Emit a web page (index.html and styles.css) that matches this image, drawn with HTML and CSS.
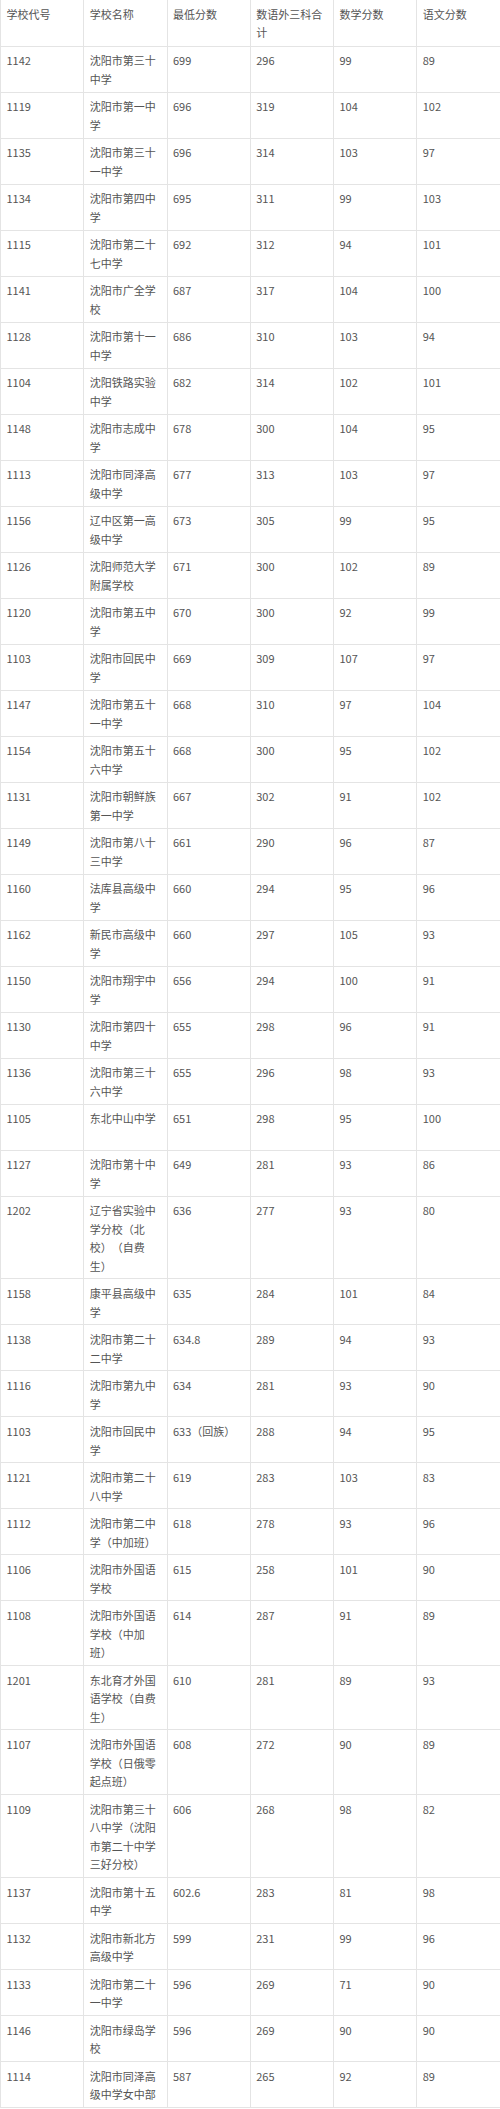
FILE: index.html
```html
<!DOCTYPE html>
<html lang="zh-CN">
<head>
<meta charset="utf-8">
<title>沈阳市高中录取分数</title>
<link rel="stylesheet" href="styles.css">
</head>
<body>
<table class="scores">
<colgroup><col><col><col><col><col><col></colgroup>
<tbody>
<tr><td>学校代号</td><td>学校名称</td><td>最低分数</td><td>数语外三科合计</td><td>数学分数</td><td>语文分数</td></tr>
<tr><td>1142</td><td>沈阳市第三十中学</td><td>699</td><td>296</td><td>99</td><td>89</td></tr>
<tr><td>1119</td><td>沈阳市第一中学</td><td>696</td><td>319</td><td>104</td><td>102</td></tr>
<tr><td>1135</td><td>沈阳市第三十一中学</td><td>696</td><td>314</td><td>103</td><td>97</td></tr>
<tr><td>1134</td><td>沈阳市第四中学</td><td>695</td><td>311</td><td>99</td><td>103</td></tr>
<tr><td>1115</td><td>沈阳市第二十七中学</td><td>692</td><td>312</td><td>94</td><td>101</td></tr>
<tr><td>1141</td><td>沈阳市广全学校</td><td>687</td><td>317</td><td>104</td><td>100</td></tr>
<tr><td>1128</td><td>沈阳市第十一中学</td><td>686</td><td>310</td><td>103</td><td>94</td></tr>
<tr><td>1104</td><td>沈阳铁路实验中学</td><td>682</td><td>314</td><td>102</td><td>101</td></tr>
<tr><td>1148</td><td>沈阳市志成中学</td><td>678</td><td>300</td><td>104</td><td>95</td></tr>
<tr><td>1113</td><td>沈阳市同泽高级中学</td><td>677</td><td>313</td><td>103</td><td>97</td></tr>
<tr><td>1156</td><td>辽中区第一高级中学</td><td>673</td><td>305</td><td>99</td><td>95</td></tr>
<tr><td>1126</td><td>沈阳师范大学附属学校</td><td>671</td><td>300</td><td>102</td><td>89</td></tr>
<tr><td>1120</td><td>沈阳市第五中学</td><td>670</td><td>300</td><td>92</td><td>99</td></tr>
<tr><td>1103</td><td>沈阳市回民中学</td><td>669</td><td>309</td><td>107</td><td>97</td></tr>
<tr><td>1147</td><td>沈阳市第五十一中学</td><td>668</td><td>310</td><td>97</td><td>104</td></tr>
<tr><td>1154</td><td>沈阳市第五十六中学</td><td>668</td><td>300</td><td>95</td><td>102</td></tr>
<tr><td>1131</td><td>沈阳市朝鲜族第一中学</td><td>667</td><td>302</td><td>91</td><td>102</td></tr>
<tr><td>1149</td><td>沈阳市第八十三中学</td><td>661</td><td>290</td><td>96</td><td>87</td></tr>
<tr><td>1160</td><td>法库县高级中学</td><td>660</td><td>294</td><td>95</td><td>96</td></tr>
<tr><td>1162</td><td>新民市高级中学</td><td>660</td><td>297</td><td>105</td><td>93</td></tr>
<tr><td>1150</td><td>沈阳市翔宇中学</td><td>656</td><td>294</td><td>100</td><td>91</td></tr>
<tr><td>1130</td><td>沈阳市第四十中学</td><td>655</td><td>298</td><td>96</td><td>91</td></tr>
<tr><td>1136</td><td>沈阳市第三十六中学</td><td>655</td><td>296</td><td>98</td><td>93</td></tr>
<tr><td>1105</td><td>东北中山中学</td><td>651</td><td>298</td><td>95</td><td>100</td></tr>
<tr><td>1127</td><td>沈阳市第十中学</td><td>649</td><td>281</td><td>93</td><td>86</td></tr>
<tr><td>1202</td><td>辽宁省实验中学分校（北校）（自费生）</td><td>636</td><td>277</td><td>93</td><td>80</td></tr>
<tr><td>1158</td><td>康平县高级中学</td><td>635</td><td>284</td><td>101</td><td>84</td></tr>
<tr><td>1138</td><td>沈阳市第二十二中学</td><td>634.8</td><td>289</td><td>94</td><td>93</td></tr>
<tr><td>1116</td><td>沈阳市第九中学</td><td>634</td><td>281</td><td>93</td><td>90</td></tr>
<tr><td>1103</td><td>沈阳市回民中学</td><td>633（回族）</td><td>288</td><td>94</td><td>95</td></tr>
<tr><td>1121</td><td>沈阳市第二十八中学</td><td>619</td><td>283</td><td>103</td><td>83</td></tr>
<tr><td>1112</td><td>沈阳市第二中学（中加班）</td><td>618</td><td>278</td><td>93</td><td>96</td></tr>
<tr><td>1106</td><td>沈阳市外国语学校</td><td>615</td><td>258</td><td>101</td><td>90</td></tr>
<tr><td>1108</td><td>沈阳市外国语学校（中加班）</td><td>614</td><td>287</td><td>91</td><td>89</td></tr>
<tr><td>1201</td><td>东北育才外国语学校（自费生）</td><td>610</td><td>281</td><td>89</td><td>93</td></tr>
<tr><td>1107</td><td>沈阳市外国语学校（日俄零起点班）</td><td>608</td><td>272</td><td>90</td><td>89</td></tr>
<tr><td>1109</td><td>沈阳市第三十八中学（沈阳市第二十中学三好分校）</td><td>606</td><td>268</td><td>98</td><td>82</td></tr>
<tr><td>1137</td><td>沈阳市第十五中学</td><td>602.6</td><td>283</td><td>81</td><td>98</td></tr>
<tr><td>1132</td><td>沈阳市新北方高级中学</td><td>599</td><td>231</td><td>99</td><td>96</td></tr>
<tr><td>1133</td><td>沈阳市第二十一中学</td><td>596</td><td>269</td><td>71</td><td>90</td></tr>
<tr><td>1146</td><td>沈阳市绿岛学校</td><td>596</td><td>269</td><td>90</td><td>90</td></tr>
<tr><td>1114</td><td>沈阳市同泽高级中学女中部</td><td>587</td><td>265</td><td>92</td><td>89</td></tr>
</tbody>
</table>
</body>
</html>
```
FILE: styles.css
```css
html, body {
  margin: 0;
  padding: 0;
  background: #ffffff;
}

.scores {
  width: 500px;
  table-layout: fixed;
  border-collapse: collapse;
  font-family: "Noto Sans CJK SC", "Noto Sans", sans-serif;
  font-size: 11px;
  line-height: 18.5px;
  color: #555555;
  text-spacing-trim: space-all;
}

.scores td {
  height: 46px;
  box-sizing: border-box;
  padding: 4.8px 5px 3.2px 5.5px;
  vertical-align: top;
  border: 1px solid #e4e4e4;
  word-break: normal;
}

.scores tr:first-child td {
  border-top: 0;
}

.scores td:last-child {
  border-right: 0;
}
```
